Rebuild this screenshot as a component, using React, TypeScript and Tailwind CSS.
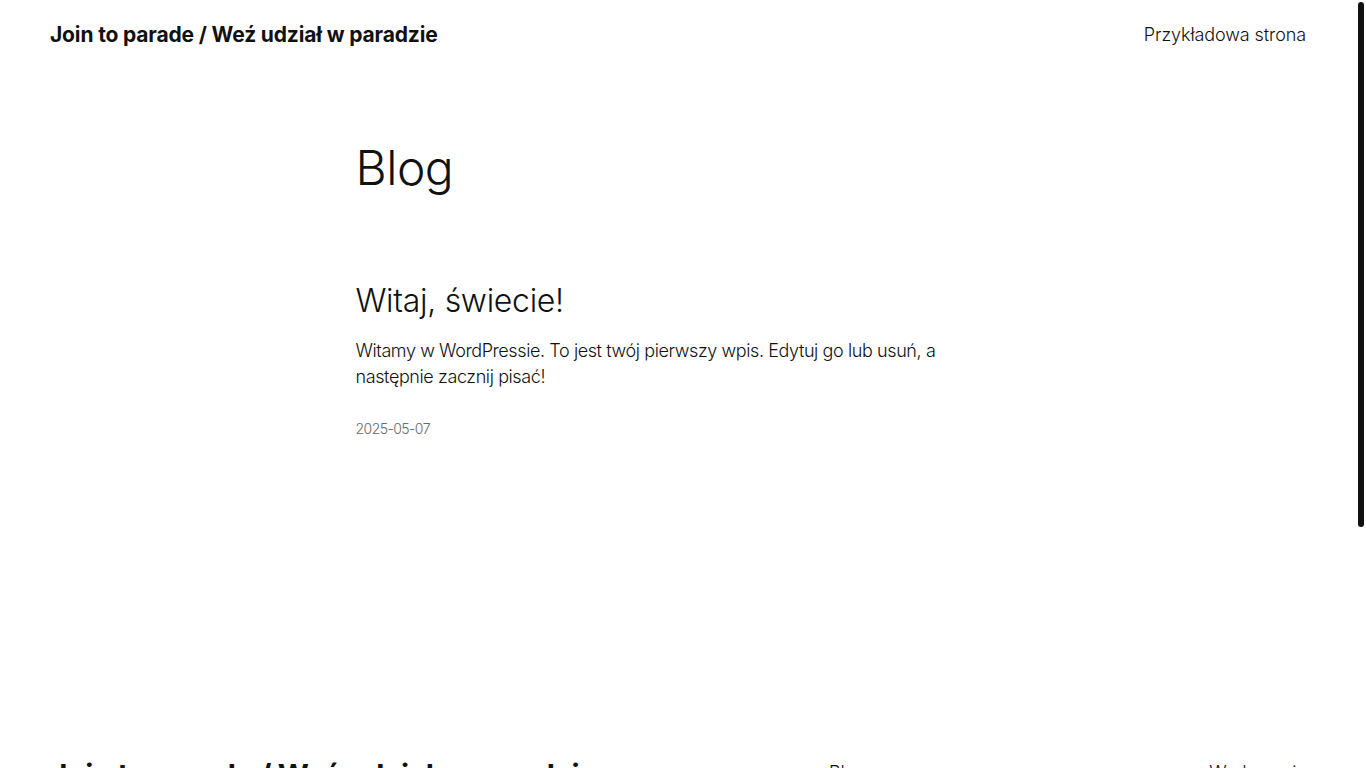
import React from "react";

export default function App() {
  return (
    <div
      className="relative h-screen w-full overflow-hidden bg-white text-[#111111]"
      style={{ fontFamily: "Inter, 'Noto Sans', 'Liberation Sans', sans-serif" }}
    >
      <div className="w-[1356px]">
        <header className="flex h-[70px] items-center justify-between px-[50px]">
          <a className="text-[21px] font-bold leading-[1.2] tracking-[-0.15px]">
            Join to parade / Weź udział w paradzie
          </a>
          <nav className="text-[18px] font-light leading-[1.4] tracking-[-0.1px]">Przykładowa strona</nav>
        </header>

        <main className="mx-auto w-[645px]">
          <h1 className="mt-[71px] text-[48px] font-light leading-[1.125] tracking-[-0.5px]">Blog</h1>
          <article>
            <h2 className="mt-[87px] text-[32px] font-light leading-[1.2] tracking-[-0.3px]">
              Witaj, świecie!
            </h2>
            <p className="mt-[18px] text-[18px] font-light leading-[1.4] tracking-[-0.4px]">
              Witamy w WordPressie. To jest twój pierwszy wpis. Edytuj go lub usuń, a następnie zacznij pisać!
            </p>
            <div className="mt-[30px] text-[14px] font-light leading-[1.4] tracking-[-0.55px] text-[#686868]">
              2025-05-07
            </div>
          </article>
        </main>

        <footer className="mt-[319px] flex items-start justify-between px-[50px]">
          <div className="text-[30px] font-bold leading-[1.2] tracking-[-0.4px]">
            Join to parade / Weź udział w paradzie
          </div>
          <div className="flex w-[477px] justify-between pt-[3px] text-[18px] font-light leading-[1.4] tracking-[-0.2px]">
            <span>Blog</span>
            <span>Wydarzenia</span>
          </div>
        </footer>
      </div>

      <div className="absolute right-[2px] top-[2px] h-[525px] w-[6px] rounded-full bg-[#111111]" />
    </div>
  );
}
